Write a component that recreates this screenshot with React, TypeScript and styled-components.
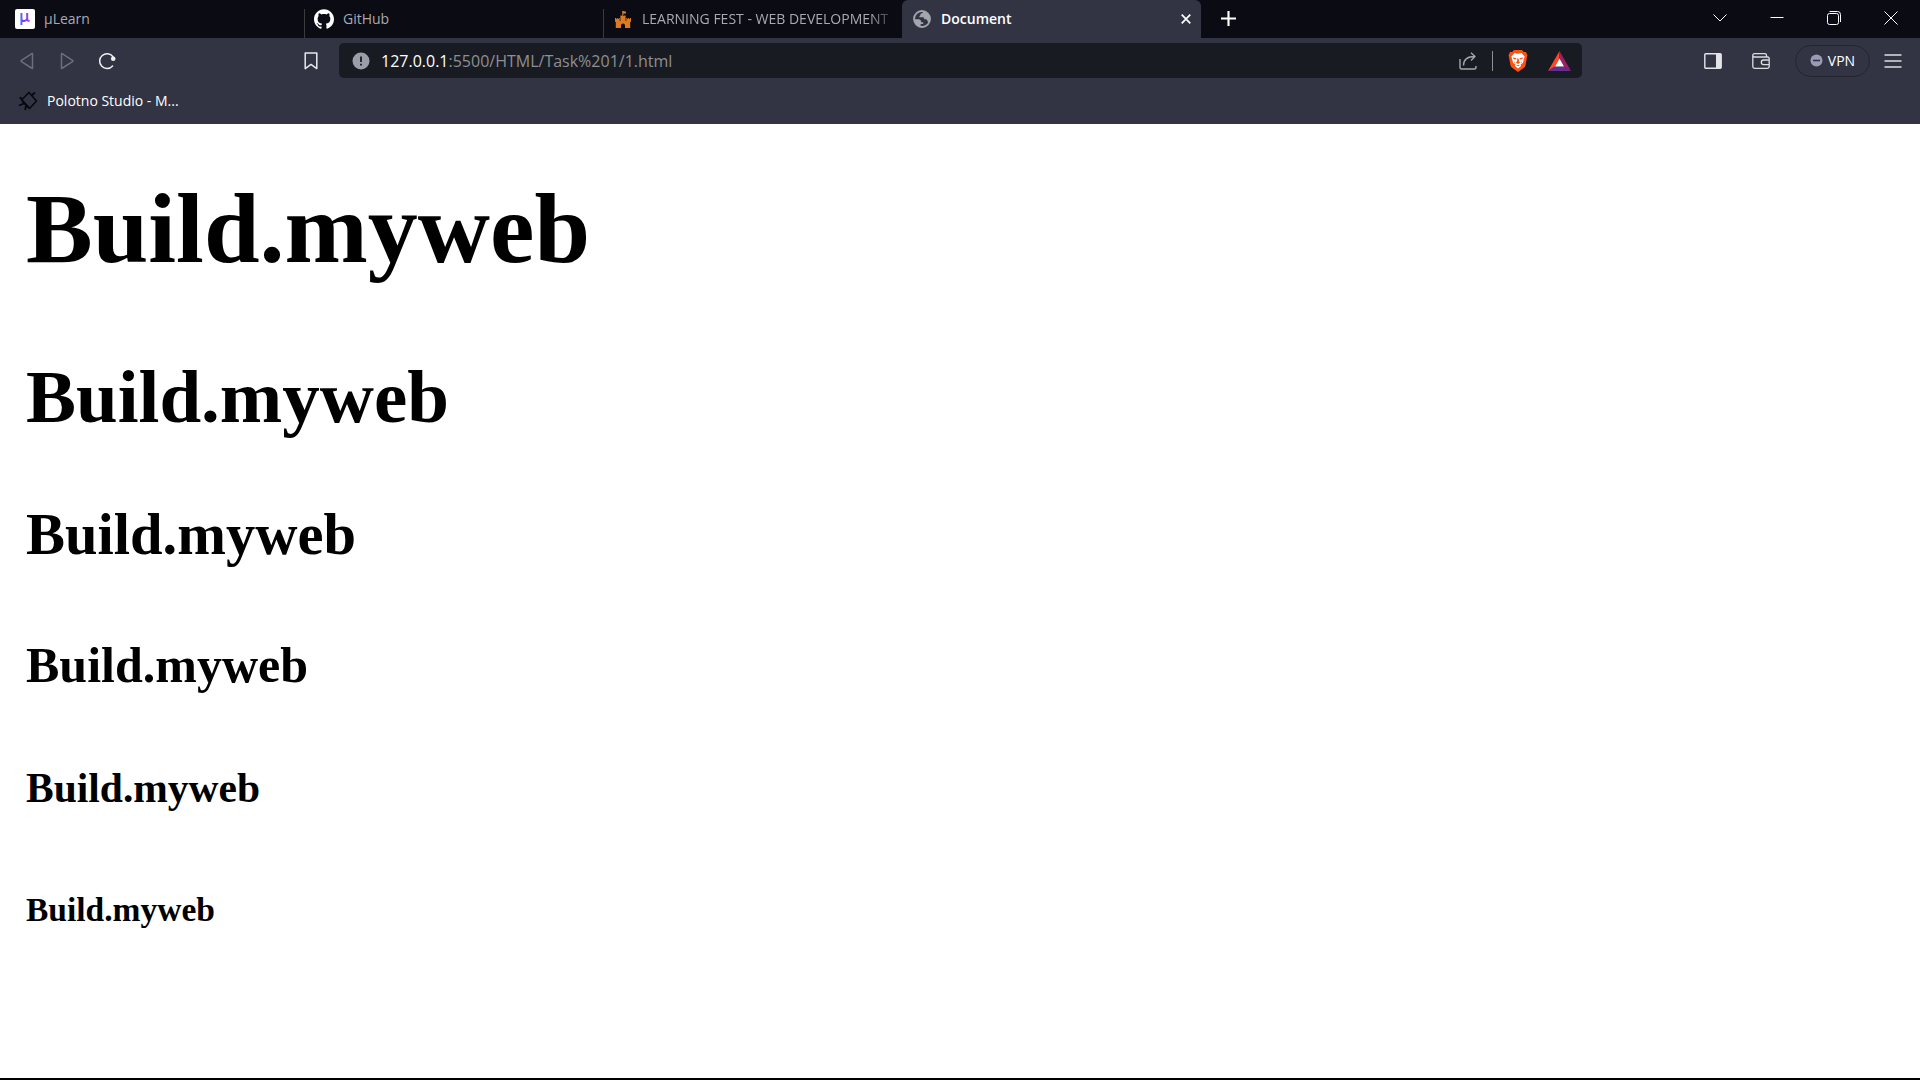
import React from "react";
import styled, { createGlobalStyle, css } from "styled-components";
import { SiGithub } from "react-icons/si";

const color = {
  strip: "#0b0b14",
  chrome: "#323443",
  field: "#191b22",
  text: "#ffffff",
  muted: "#a9aab0",
  dim: "#6c6e7a",
};

const GlobalStyle = createGlobalStyle`
  * { box-sizing: border-box; }
  html, body { margin: 0; background: #ffffff; }
`;

const Window = styled.div`
  display: flex;
  flex-direction: column;
  min-height: 100vh;
  border-bottom: 2px solid #000000;
  font-family: "Open Sans", "Noto Sans", sans-serif;
  font-size: 14px;
  line-height: 20px;
  color: ${color.text};
`;

const buttonReset = css`
  border: 0;
  padding: 0;
  margin: 0;
  background: none;
  font: inherit;
  color: inherit;
  cursor: pointer;
`;

const TabStrip = styled.header`
  display: flex;
  height: 38px;
  background: ${color.strip};
`;

const Tabs = styled.div`
  display: flex;
  flex: 0 1 1201px;
  min-width: 0;
  padding-left: 5px;
`;

const Tab = styled.div<{ $active?: boolean; $divided?: boolean }>`
  display: flex;
  align-items: center;
  flex: 1 1 0;
  min-width: 0;
  padding: 0 10px;
  background: ${(p) => (p.$active ? color.chrome : "transparent")};
  background-image: ${(p) =>
    p.$divided ? "linear-gradient(#3c3b3c, #3c3b3c)" : "none"};
  background-size: 1px 29px;
  background-position: left bottom;
  background-repeat: no-repeat;
  border-radius: 6px 6px 0 0;
  color: ${(p) => (p.$active ? color.text : color.muted)};
  font-weight: ${(p) => (p.$active ? 600 : 400)};
`;

const TabButton = styled.button`
  ${buttonReset}
  display: flex;
  align-items: center;
  gap: 9px;
  flex: 1;
  min-width: 0;
  text-align: left;
`;

const TabIcon = styled.span`
  display: flex;
  align-items: center;
  justify-content: center;
  flex: none;
  width: 20px;
  height: 20px;
`;

const TabTitle = styled.span<{ $fade?: boolean }>`
  flex: 1;
  overflow: hidden;
  white-space: nowrap;
  ${(p) =>
    p.$fade &&
    css`
      margin-right: -6px;
      mask-image: linear-gradient(to left, transparent, #000 28px);
    `}
`;

const MuBadge = styled.span`
  display: flex;
  align-items: center;
  justify-content: center;
  width: 20px;
  height: 20px;
  border-radius: 2px;
  background: #ffffff;
`;

const IconButton = styled.button<{ $width?: number }>`
  ${buttonReset}
  display: flex;
  align-items: center;
  justify-content: center;
  flex: none;
  width: ${(p) => p.$width ?? 40}px;
  height: 36px;
`;

const WindowControls = styled.div`
  display: flex;
  margin-left: auto;
  padding-right: 1px;
`;

const Toolbar = styled.div`
  display: grid;
  grid-template-columns: 339px minmax(0, 1fr) 338px;
  align-items: center;
  height: 45px;
  background: ${color.chrome};
`;

const NavGroup = styled.nav`
  display: flex;
  padding: 0 8px 0 7px;
`;

const BookmarkSlot = styled.div`
  margin-left: auto;
`;

const AddressBar = styled.form`
  display: flex;
  align-items: center;
  height: 35px;
  padding: 0 2px;
  border-radius: 5px;
  background: ${color.field};
  font-size: 16px;
`;

const Host = styled.label`
  color: ${color.text};
`;

const PathInput = styled.input`
  flex: 1;
  min-width: 0;
  border: 0;
  padding: 0;
  outline: 0;
  background: none;
  font: inherit;
  color: #8d8f94;
`;

const FieldDivider = styled.span`
  width: 1px;
  height: 20px;
  margin: 0 5px 0 4px;
  background: #8f8f93;
`;

const ActionGroup = styled.div`
  display: flex;
  align-items: center;
  justify-content: flex-end;
  gap: 8px;
  padding-right: 7px;
`;

const VpnButton = styled.button`
  ${buttonReset}
  display: flex;
  align-items: center;
  justify-content: center;
  gap: 5px;
  width: 75px;
  height: 32px;
  margin: 0 -5px 0 6px;
  border: 1px solid #232533;
  border-radius: 16px;
`;

const BookmarksBar = styled.div`
  display: flex;
  height: 41px;
  padding: 8px 18px;
  background: ${color.chrome};
`;

const BookmarkLink = styled.a`
  display: flex;
  align-items: center;
  gap: 9px;
  height: 20px;
  color: ${color.text};
  text-decoration: none;
`;

const Page = styled.main`
  flex: 1;
  padding: 47px 26px;
  background: #ffffff;
  color: #000000;
  font-family: "Liberation Serif", "Times New Roman", serif;
  font-size: 50px;
  line-height: normal;

  h1, h2, h3, h4, h5, h6 { margin: 0; font-weight: 700; }
  h1 { font-size: 2em; }
  h2 { font-size: 1.5em; margin-top: 68px; }
  h3 { font-size: 1.17em; margin-top: 61px; }
  h4 { font-size: 1em; margin-top: 68px; }
  h5 { font-size: 0.83em; margin-top: 70px; }
  h6 { font-size: 0.67em; margin-top: 79px; }
`;

const Mu = () => (
  <svg width="20" height="20" viewBox="0 0 20 20" fill="none" strokeWidth="2">
    <defs>
      <linearGradient id="mu" gradientUnits="userSpaceOnUse" x1="5" y1="0" x2="15" y2="0">
        <stop offset="0" stopColor="#4d7cf8" />
        <stop offset=".4" stopColor="#6a3df0" />
        <stop offset="1" stopColor="#c03af7" />
      </linearGradient>
    </defs>
    <path d="M6.4 4V16M6.4 9.5Q6.4 12 8.8 12T12.2 9.5V4M12.2 10Q12.4 12 14.6 12" stroke="url(#mu)" />
  </svg>
);

const Castle = () => (
  <svg width="16" height="17" viewBox="0 0 16 17" fill="#dd7a1f">
    <path d="M7.2 0H8.5L11 .8V2.6L8.4 2.4V5H9.2V4.6H10.6V10H11.3V7H12.3V8H13.2V7H14.2V8H15V7H16V10.5L15.2 11.2V17H10V14.5Q10 12.6 8 12.6T6 14.5V17H.8V11.2L0 10.5V7H1V8H1.8V7H2.8V8H3.7V7H4.7V10H5.4V4.6H6.8V5H7.3Z" />
  </svg>
);

const Globe = () => (
  <svg width="18" height="18" viewBox="0 0 18 18">
    <circle cx="9" cy="9" r="8" fill="none" stroke="#a3a6ad" strokeWidth="1.8" />
    <path d="M10.5 1.6Q9.8 3.4 8.2 3.6 7 4 7.3 5.6 6 5.8 6.4 7.2H10Q11.3 7.4 11.3 9.3H13.2Q14.4 9.6 14.6 11.6L16 12.4Q17.6 8 15.4 4.6 13.5 2 10.5 1.6Z" fill="#a3a6ad" />
    <path d="M1.3 9.3H5.6Q8.2 9.6 8.2 12.3H10.2V14H7.6V16.7Q2 15.6 1.3 9.3Z" fill="#a3a6ad" />
  </svg>
);

const Polotno = () => (
  <svg width="20" height="20" viewBox="0 0 20 20" fill="none" stroke="#07080c" strokeWidth="1.5">
    <path d="M11 1.5 18.5 10 11.5 17.5 3.5 9Z" strokeLinejoin="round" />
    <path d="M13.5 4.5 17 1.5M4.5 8 1.5 6.5M6 12.5 1 14.5M8 15 7 19" strokeWidth="1.8" />
    <path d="M4.5 10 10.5 16.5" strokeWidth="2" />
  </svg>
);

const Triangle = ({ flip }: { flip?: boolean }) => (
  <svg width="16" height="18" viewBox="0 0 16 18" fill="none" stroke={color.dim} strokeWidth="1.5" strokeLinejoin="round">
    <path d={flip ? "M2.5 1.5V16.5L3.5 16 13.5 9.7Q14.3 9 13.5 8.3L3.5 1.8Z" : "M13.5 1.5V16.5L12.5 16 2.5 9.7Q1.7 9 2.5 8.3L12.5 1.8Z"} />
  </svg>
);

const Reload = () => (
  <svg width="18" height="18" viewBox="0 0 18 18" fill="none">
    <path d="M14.6 14A7.4 7.4 0 1 1 15 4.7" stroke="#f0f0f2" strokeWidth="1.5" strokeLinecap="round" />
    <circle cx="15.2" cy="6.8" r="2.3" fill="#f0f0f2" />
  </svg>
);

const Bookmark = () => (
  <svg width="14" height="18" viewBox="0 0 14 18" fill="none" stroke="#e8e8ec" strokeWidth="1.5" strokeLinejoin="round">
    <path d="M1.2 1H12.8V16.6L7 12.4 1.2 16.6Z" />
  </svg>
);

const Info = () => (
  <svg width="18" height="18" viewBox="0 0 18 18">
    <circle cx="9" cy="9" r="8.5" fill="#9b9ea8" />
    <path d="M9 4.5V10M9 11.8V13.6" stroke={color.field} strokeWidth="1.8" />
  </svg>
);

const Share = () => (
  <svg width="18" height="18" viewBox="0 0 18 18" fill="none" stroke="#a6a6aa" strokeWidth="1.4" strokeLinejoin="round">
    <path d="M1 7V15.2Q1 17 2.8 17H15.2Q17 17 17 15.2V14" />
    <path d="M4.5 13.5C4.5 8 8 4.5 16 4.5M12 .8 16 4.5 12 8.4" />
  </svg>
);

const Brave = () => (
  <svg width="20" height="22" viewBox="0 0 20 22">
    <path d="M6 0H14L15.8 2H18L19.4 5.2 19 7 17.6 15Q17.2 16.8 15.6 18L10 22 4.4 18Q2.8 16.8 2.4 15L1 7 .6 5.2 2 2H4.2Z" fill="#fb5412" />
    <path d="M6.5 3 10 3.8 13.5 3 16.6 6.6 15.8 9.4 14.8 13 12.6 14.6 13 16 10 18.6 7 16 7.4 14.6 5.2 13 4.2 9.4 3.4 6.6Z" fill="#fff" />
    <path d="M4.8 7.4 8.4 8.2 8 9.6 5.6 9ZM15.2 7.4 11.6 8.2 12 9.6 14.4 9ZM9.3 8.5H10.7L11 11.6 12.2 12.6 10 14 7.8 12.6 9 11.6ZM6.2 11.4 7.4 13 6 12.6ZM13.8 11.4 12.6 13 14 12.6ZM8 15.6 10 14.9 12 15.6 10 16.2Z" fill="#fb5412" />
  </svg>
);

const Bat = () => (
  <svg width="23" height="20" viewBox="0 0 23 20">
    <path d="M11.5 0 0 20 7 15.5 11.5 7.5Z" fill="#ff4724" />
    <path d="M11.5 0 23 20 16 15.5 11.5 7.5Z" fill="#9e1f63" />
    <path d="M0 20H23L16 15.5H7Z" fill="#662d91" />
    <path d="M11.5 7.5 16 15.5H7Z" fill="#fff" />
  </svg>
);

const SidePanel = () => (
  <svg width="18" height="16" viewBox="0 0 18 16">
    <rect x=".8" y=".8" width="16.4" height="14.4" rx="1" fill="none" stroke="#e4e4e8" strokeWidth="1.4" />
    <path d="M12 1H17V15H12Z" fill="#e4e4e8" />
  </svg>
);

const Wallet = () => (
  <svg width="18" height="16" viewBox="0 0 18 16" fill="none" stroke="#dcdce0" strokeWidth="1.3">
    <path d="M.8 2.5V13.5Q.8 15.3 2.6 15.3H15.4Q17.2 15.3 17.2 13.5V5.5Q17.2 4 15.6 4H2.5Q.8 4 .8 2.3.8.7 2.5.7H12.5Q14.5.7 14.5 2.5V4" />
    <path d="M17 7H11.5Q9.3 7 9.3 9.3T11.5 11.7H17" />
  </svg>
);

const VpnDot = () => (
  <svg width="13" height="13" viewBox="0 0 13 13">
    <circle cx="6.5" cy="6.5" r="6" fill="#9a9bb4" />
    <path d="M3 6.5H10" stroke={color.chrome} strokeWidth="1.6" />
  </svg>
);

const Menu = () => (
  <svg width="18" height="14" viewBox="0 0 18 14" stroke="#dedee2" strokeWidth="1.4">
    <path d="M.5 1H17.5M.5 7H17.5M.5 13H17.5" />
  </svg>
);

const Stroke = ({ d, size = 14, width = 1 }: { d: string; size?: number; width?: number }) => (
  <svg width={size} height={size} viewBox="0 0 14 14" fill="none" stroke="#fff" strokeWidth={width}>
    <path d={d} />
  </svg>
);

type TabInfo = {
  title: string;
  icon: React.ReactNode;
  active?: boolean;
  divided?: boolean;
  fade?: boolean;
};

const tabs: TabInfo[] = [
  { title: "µLearn", icon: <MuBadge><Mu /></MuBadge> },
  { title: "GitHub", icon: <SiGithub size={20} color="#fff" />, divided: true },
  { title: "LEARNING FEST - WEB DEVELOPMENT", icon: <Castle />, divided: true, fade: true },
  { title: "Document", icon: <Globe />, active: true },
];

const controls = [
  { label: "Search tabs", path: "M.5 3.5 7 10 13.5 3.5" },
  { label: "Minimize", path: "M.5 6.5H13.5" },
  { label: "Restore", path: "M2.5.5H10.5Q13.5.5 13.5 3.5V11M2.5 2.5H9.5Q11.5 2.5 11.5 4.5V11.5Q11.5 13.5 9.5 13.5H2.5Q.5 13.5.5 11.5V4.5Q.5 2.5 2.5 2.5Z" },
  { label: "Close window", path: "M.5.5 13.5 13.5M13.5.5.5 13.5" },
];

export default function App() {
  return (
    <Window>
      <GlobalStyle />
      <TabStrip>
        <Tabs role="tablist">
          {tabs.map((t) => (
            <Tab key={t.title} $active={t.active} $divided={t.divided}>
              <TabButton role="tab" aria-selected={!!t.active}>
                <TabIcon>{t.icon}</TabIcon>
                <TabTitle $fade={t.fade}>{t.title}</TabTitle>
              </TabButton>
              {t.active && (
                <IconButton $width={10} aria-label="Close tab">
                  <Stroke d="M1 1 13 13M13 1 1 13" size={10} width={2.4} />
                </IconButton>
              )}
            </Tab>
          ))}
        </Tabs>
        <IconButton $width={55} aria-label="New tab">
          <Stroke d="M7 0V14M0 7H14" size={15} width={2} />
        </IconButton>
        <WindowControls>
          {controls.map((c) => (
            <IconButton key={c.label} $width={57} aria-label={c.label}>
              <Stroke d={c.path} />
            </IconButton>
          ))}
        </WindowControls>
      </TabStrip>
      <Toolbar>
        <NavGroup>
          <IconButton aria-label="Back"><Triangle /></IconButton>
          <IconButton aria-label="Forward"><Triangle flip /></IconButton>
          <IconButton aria-label="Reload"><Reload /></IconButton>
          <BookmarkSlot>
            <IconButton aria-label="Bookmark this tab"><Bookmark /></IconButton>
          </BookmarkSlot>
        </NavGroup>
        <AddressBar>
          <IconButton type="button" aria-label="Site information"><Info /></IconButton>
          <Host htmlFor="address">127.0.0.1</Host>
          <PathInput id="address" type="text" spellCheck={false} defaultValue=":5500/HTML/Task%201/1.html" />
          <IconButton type="button" aria-label="Share"><Share /></IconButton>
          <FieldDivider />
          <IconButton type="button" aria-label="Brave Shields"><Brave /></IconButton>
          <IconButton type="button" $width={42} aria-label="Brave Rewards"><Bat /></IconButton>
        </AddressBar>
        <ActionGroup>
          <IconButton aria-label="Side panel"><SidePanel /></IconButton>
          <IconButton aria-label="Wallet"><Wallet /></IconButton>
          <VpnButton><VpnDot />VPN</VpnButton>
          <IconButton aria-label="Menu"><Menu /></IconButton>
        </ActionGroup>
      </Toolbar>
      <BookmarksBar>
        <BookmarkLink href="#polotno">
          <Polotno />
          Polotno Studio - M...
        </BookmarkLink>
      </BookmarksBar>
      <Page>
        <h1>Build.myweb</h1>
        <h2>Build.myweb</h2>
        <h3>Build.myweb</h3>
        <h4>Build.myweb</h4>
        <h5>Build.myweb</h5>
        <h6>Build.myweb</h6>
      </Page>
    </Window>
  );
}
